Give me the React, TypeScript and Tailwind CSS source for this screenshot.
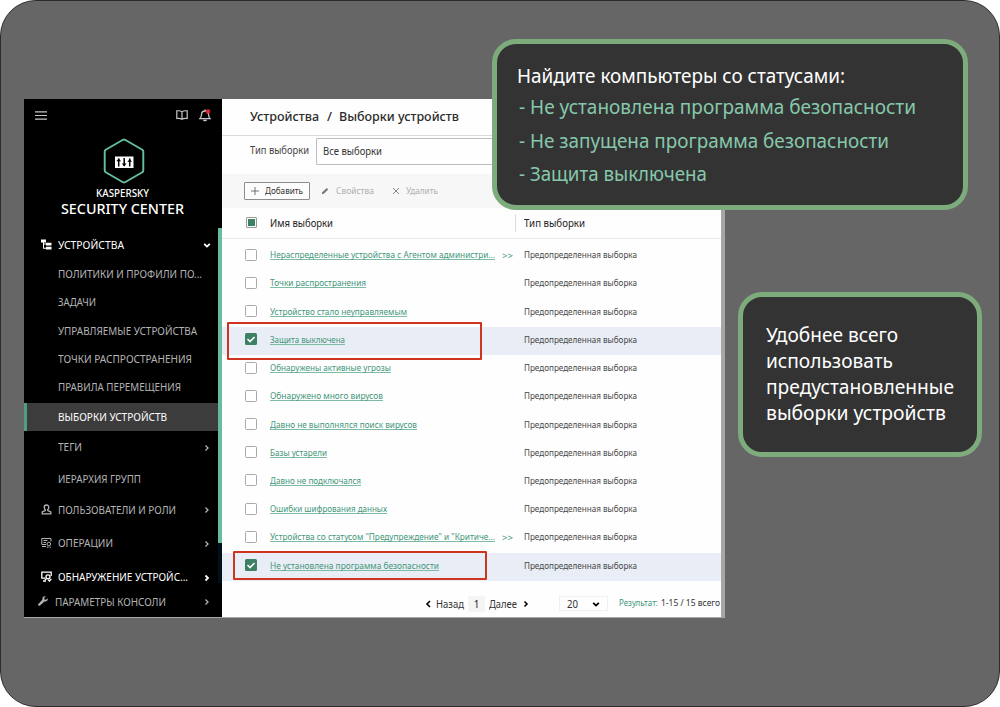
import { useLayoutEffect, useRef, useState } from "react";
import type { ReactNode } from "react";

/** Single line of text condensed or widened to a known width. */
function Fit({ w, className = "", children }: { w: number; className?: string; children: ReactNode }) {
  const ref = useRef<HTMLSpanElement>(null);
  const [scale, setScale] = useState(1);
  useLayoutEffect(() => {
    const el = ref.current;
    if (!el) return;
    const prev = el.style.transform;
    el.style.transform = "none";
    const natural = el.getBoundingClientRect().width;
    el.style.transform = prev;
    if (natural > 0) setScale(w / natural);
  }, [w, children]);
  return (
    <span className={`block shrink-0 whitespace-nowrap ${className}`} style={{ width: w }}>
      <span ref={ref} className="inline-block origin-left" style={{ transform: `scaleX(${scale})` }}>
        {children}
      </span>
    </span>
  );
}

function Chevron({ dir = "right", className = "" }: { dir?: "right" | "left" | "down"; className?: string }) {
  const d = { right: "M2.500 1.500l2.500 2.500-2.500 2.500", left: "M5 1L2 4l3 3", down: "M1.200 2.800l2.800 2.800 2.800-2.800" }[dir];
  return (
    <svg viewBox="0 0 8 8" className={`size-2 shrink-0 ${className}`} fill="none" stroke="currentColor">
      <path d={d} />
    </svg>
  );
}

function TreeIcon() {
  return (
    <svg viewBox="0 0 11 11" className="h-[11px] w-[11px]" fill="currentColor">
      <path d="M0 .5h5v3H3v1h2V3.800h5.500v2.800H5V5.500H3v3.200h2V7.800h5.500v2.800H5v-.9H2V3.500H0z" />
    </svg>
  );
}

function UserIcon() {
  return (
    <svg viewBox="0 0 11 11" className="h-[11px] w-[11px]" fill="none" stroke="currentColor" strokeWidth="1.300">
      <path d="M5.500 1c-1.400 0-2.300 1-2.300 2.300 0 1 .4 1.900 1.100 2.400v.8L1.200 8v1.800h8.600V8L6.700 6.500v-.8c.7-.5 1.100-1.400 1.100-2.400C7.800 2 6.900 1 5.500 1z" />
    </svg>
  );
}

function OperationsIcon() {
  return (
    <svg viewBox="0 0 11 11" className="h-[11px] w-[11px]" fill="none" stroke="currentColor">
      <path d="M10 4.500V1.500H.8v6H5M2.500 3.500h4M2.500 5.500h2.500M1 9.500h4" />
      <circle cx="7.800" cy="7" r="1.800" />
      <path d="M6 10.200h4" strokeDasharray="1 .6" />
    </svg>
  );
}

function DiscoveryIcon() {
  return (
    <svg viewBox="0 0 11 11" className="h-[11px] w-[11px]" fill="none" stroke="currentColor" strokeWidth="1.300">
      <path d="M10.200 5V1.200H.8v6H4M2 10h3" />
      <circle cx="7" cy="5.800" r="2" />
      <path d="M5.600 7.300L3.800 9.300M7 8.800l1.500 1.200 1.800-2.200" />
    </svg>
  );
}

function WrenchIcon() {
  return (
    <svg viewBox="0 0 10 10" className="h-[10px] w-[10px]" fill="currentColor">
      <path d="M9.700 2.200L8 3.800 6.500 3.400 6.200 2 7.800.3C6.600-.1 5.300.3 4.700 1.400c-.4.700-.4 1.400-.2 2L.4 7.900c-.5.5-.4 1.200 0 1.600.4.400 1.100.5 1.600 0l4.400-4.100c.7.200 1.500.1 2.200-.4 1-.6 1.400-1.700 1.100-2.800z" />
    </svg>
  );
}

function Logo() {
  return (
    <svg viewBox="0 0 42 46" className="ml-[3px] h-[46px] w-[42px] shrink-0">
      <path
        d="M20 1.800q1-.5 2 0l17.300 10q1 .6 1 1.700v19q0 1.100-1 1.700L22 44.200q-1 .5-2 0L2.700 34.200q-1-.6-1-1.700v-19q0-1.100 1-1.700z"
        fill="none"
        stroke="#65bfa0"
        strokeWidth="1.900"
      />
      <rect x="12" y="18.500" width="18.500" height="11.500" fill="#fff" />
      <path d="M15.700 20.500v8M21.200 20v8M26.700 20.500v8" stroke="#000" strokeWidth="1.500" />
      <path d="M13.400 23.200l2.300-2.900 2.300 2.900zM18.900 25.500h4.600l-2.300 2.900zM24.400 23.800l2.300-2.900 2.300 2.900z" fill="#000" />
    </svg>
  );
}

type NavProps = {
  label: string;
  w: number;
  h: string;
  icon?: ReactNode;
  chevron?: "right" | "down";
  tone?: string;
  shift?: boolean;
};

function NavItem({ label, w, h, icon, chevron, tone = "text-[#b4b4b4]", shift }: NavProps) {
  return (
    <div className={`flex shrink-0 items-center pb-[1px] ${h} ${tone} ${shift ? "pl-[14px]" : "pl-[17px]"}`}>
      <span className="flex w-[17px] shrink-0">{icon}</span>
      <Fit w={w} className="text-[11px] leading-none">
        {label}
      </Fit>
      {chevron && (
        <span className="ml-auto flex pt-[2px] pr-[7px]">
          <Chevron dir={chevron} className={tone === "text-white" ? "[stroke-width:1.8]" : "[stroke-width:1.3]"} />
        </span>
      )}
    </div>
  );
}

function Sidebar() {
  return (
    <aside className="flex w-[198px] shrink-0 bg-black">
      <div className="flex w-[194px] flex-col">
        <div className="flex h-[32px] items-center pr-[7px] pl-[11px] text-[#c6c6c6]">
          <svg viewBox="0 0 12 9" className="h-[9px] w-[12px]" stroke="currentColor" strokeWidth="1.200">
            <path d="M0 .8h12M0 4.500h12M0 8.200h12" />
          </svg>
          <svg viewBox="0 0 12 10" className="ml-auto h-[10px] w-[12px]" fill="none" stroke="currentColor" strokeWidth="1.200">
            <path d="M6 1.800C5 .8 3 .6 .8 .8v7.700C3 8.300 5 8.500 6 9.400c1-.9 3-1.100 5.200-.9V.8C9 .6 7 .8 6 1.800zv7.600" />
          </svg>
          <svg viewBox="0 0 12 13" className="ml-[11px] h-[13px] w-[12px]" fill="none" stroke="currentColor" strokeWidth="1.300">
            <path d="M.8 9.700h10.400C9.800 8.600 9.600 7.500 9.500 5.500 9.400 3.300 8.200 2 6 2S2.600 3.300 2.500 5.500C2.400 7.500 2.200 8.600.8 9.700zM4.500 10.800c.3 1 2.700 1 3 0M6 2V.5" />
            <circle cx="9" cy="2.500" r="2.300" fill="#e0232e" stroke="none" />
          </svg>
        </div>
        <div className="flex h-[98px] flex-col items-center pt-[7px] pl-[2px] text-white">
          <Logo />
          <Fit w={53} className="mt-[3px] text-[11px] leading-[12px] font-medium">
            KASPERSKY
          </Fit>
          <Fit w={123} className="mt-[2px] text-[14px] leading-[16px] font-medium">
            SECURITY CENTER
          </Fit>
        </div>
        <NavItem h="h-[31px]" label="УСТРОЙСТВА" w={66} icon={<TreeIcon />} chevron="down" tone="text-white" />
        <NavItem h="h-[28.25px]" label="ПОЛИТИКИ И ПРОФИЛИ ПО..." w={144} />
        <NavItem h="h-[28.25px]" label="ЗАДАЧИ" w={38} />
        <NavItem h="h-[28.25px]" label="УПРАВЛЯЕМЫЕ УСТРОЙСТВА" w={139} />
        <NavItem h="h-[28.25px]" label="ТОЧКИ РАСПРОСТРАНЕНИЯ" w={134} />
        <NavItem h="h-[28.25px]" label="ПРАВИЛА ПЕРЕМЕЩЕНИЯ" w={123} />
        <div className="mt-[1.75px] flex h-[28px] shrink-0 items-center border-l-3 border-[#4f9d84] bg-[#3c3c3c] pb-[2px] pl-[31px] text-white">
          <Fit w={109} className="text-[11px] leading-none">
            ВЫБОРКИ УСТРОЙСТВ
          </Fit>
        </div>
        <NavItem h="h-[32px]" label="ТЕГИ" w={24} chevron="right" />
        <NavItem h="h-[31px]" label="ИЕРАРХИЯ ГРУПП" w={83} />
        <NavItem h="h-[31px]" label="ПОЛЬЗОВАТЕЛИ И РОЛИ" w={118} icon={<UserIcon />} chevron="right" />
        <NavItem h="h-[36px]" label="ОПЕРАЦИИ" w={55} icon={<OperationsIcon />} chevron="right" />
        <NavItem h="h-[32px]" label="ОБНАРУЖЕНИЕ УСТРОЙС..." w={130} icon={<DiscoveryIcon />} chevron="right" tone="text-white" />
        <NavItem h="h-[17px]" label="ПАРАМЕТРЫ КОНСОЛИ" w={111} icon={<WrenchIcon />} chevron="right" shift />
      </div>
      <div className="flex w-[4px] flex-col pt-[129px]">
        <div className="h-[315px] bg-[#67bc9d]" />
        <div className="h-[40px] bg-[#02101c]" />
      </div>
    </aside>
  );
}

function Checkbox({ checked }: { checked?: boolean }) {
  return checked ? (
    <span className="flex size-[12px] shrink-0 items-center justify-center rounded-[1.5px] bg-[#3c8163] text-white">
      <svg viewBox="0 0 10 10" className="size-[10px]" fill="none" stroke="currentColor" strokeWidth="1.600">
        <path d="M1.500 5l2.500 2.500 4.500-4.500" />
      </svg>
    </span>
  ) : (
    <span className="size-[12px] shrink-0 rounded-[1.5px] border border-[#a9a9a9] bg-white" />
  );
}

const rows: { name: string; w: number; more?: boolean; checked?: boolean }[] = [
  { name: "Нераспределенные устройства с Агентом администри...", w: 225, more: true },
  { name: "Точки распространения", w: 96 },
  { name: "Устройство стало неуправляемым", w: 137 },
  { name: "Защита выключена", w: 75, checked: true },
  { name: "Обнаружены активные угрозы", w: 121 },
  { name: "Обнаружено много вирусов", w: 113 },
  { name: "Давно не выполнялся поиск вирусов", w: 147 },
  { name: "Базы устарели", w: 57 },
  { name: "Давно не подключался", w: 91 },
  { name: "Ошибки шифрования данных", w: 117 },
  { name: 'Устройства со статусом "Предупреждение" и "Критиче...', w: 225, more: true },
  { name: "Не установлена программа безопасности", w: 169, checked: true },
];

function Main() {
  return (
    <main className="flex w-[499px] shrink-0 flex-col bg-[#fefefe] text-[#333]">
      <div className="flex h-[37px] items-center border-b border-[#d9d9d9] pl-[28px] text-[12px] leading-none font-medium text-[#2b2b2b]">
        <Fit w={69}>Устройства</Fit>
        <Fit w={5} className="ml-[8px]">/</Fit>
        <Fit w={120} className="ml-[7px]">Выборки устройств</Fit>
      </div>
      <div className="flex h-[38px] pt-[2px] pl-[28px]">
        <Fit w={59} className="pt-[6px] text-[10px] leading-[12px] text-[#444]">
          Тип выборки
        </Fit>
        <div className="ml-[7px] flex h-[27px] flex-1 items-center rounded-l-[2px] border border-r-0 border-[#bdbdbd] pb-[1px] pl-[6px]">
          <Fit w={59} className="text-[10px] leading-none text-[#333]">
            Все выборки
          </Fit>
        </div>
      </div>
      <div className="flex h-[34px] items-center bg-[#f7f7f7] pl-[22px] text-[9px] leading-none text-[#b0b0b0]">
        <div className="flex h-[18px] w-[66px] items-center rounded-[1px] border border-[#8c8c8c] bg-[#fcfcfc] pl-[6px] text-[#333]">
          <svg viewBox="0 0 8 8" className="size-2" stroke="#666" strokeWidth=".9">
            <path d="M4 0v8M0 4h8" />
          </svg>
          <Fit w={38} className="ml-[6px] pb-[1px]">Добавить</Fit>
        </div>
        <svg viewBox="0 0 8 8" className="ml-[11px] size-2" fill="#777">
          <path d="M.8 7.300L1.300 5.300 5.700 .9 7.200 2.400 2.800 6.800z" />
        </svg>
        <Fit w={38} className="ml-[7px] pb-[1px]">Свойства</Fit>
        <svg viewBox="0 0 8 8" className="ml-[18px] size-2" stroke="#777" strokeWidth=".9">
          <path d="M1 1l6 6M7 1L1 7" />
        </svg>
        <Fit w={32} className="ml-[6px] pb-[1px]">Удалить</Fit>
      </div>
      <div className="flex h-[31px] items-center border-b border-[#e8e8e8] pl-[24px] text-[10px] leading-none text-[#222]">
        <span className="mb-[2px] flex size-[11px] items-center justify-center rounded-[1px] border border-[#9a9a9a] bg-white">
          <span className="size-[7px] bg-[#3c8163]" />
        </span>
        <Fit w={63} className="ml-[13px]">Имя выборки</Fit>
        <span className="ml-[182px] h-[18px] w-px bg-[#dcdcdc]" />
        <Fit w={61} className="ml-[8px]">Тип выборки</Fit>
      </div>
      <div className="pt-[3.500px]">
        {rows.map((r) => (
          <div
            key={r.name}
            className={`flex h-[28.24px] items-center pb-[4px] pl-[23px] text-[9px] leading-none ${r.checked ? "bg-[#e9edf5]" : ""}`}
          >
            <Checkbox checked={r.checked} />
            <div className="ml-[13px] flex w-[254px] items-center pt-[1px] text-[#43977a]">
              <Fit
                w={r.w}
                className="leading-[12px] [&>span]:underline [&>span]:decoration-[#7dbba5] [&>span]:decoration-1 [&>span]:underline-offset-[1px] [&>span]:[text-decoration-skip-ink:none]"
              >
                {r.name}
              </Fit>
              {r.more && <Fit w={11} className="ml-[7px]">&gt;&gt;</Fit>}
            </div>
            <Fit w={113} className="text-[#484848]">Предопределенная выборка</Fit>
          </div>
        ))}
      </div>
      <div className="flex flex-1 items-center pt-[10px] text-[10px] leading-none text-[#333]">
        <Chevron dir="left" className="ml-[203px] text-black [stroke-width:1.6]" />
        <Fit w={28} className="ml-[3px]">Назад</Fit>
        <span className="ml-[4px] flex h-[16px] w-[17px] items-center justify-center bg-[#f5f5f5] text-[#222]">1</span>
        <Fit w={28} className="ml-[4px]">Далее</Fit>
        <Chevron className="ml-[5px] text-black [stroke-width:1.6]" />
        <div className="mb-[1px] ml-[29px] flex h-[15px] w-[49px] items-center border border-[#f0f0f0] pl-[7px]">
          <Fit w={11}>20</Fit>
          <Chevron dir="down" className="ml-[14px] text-black [stroke-width:1.8]" />
        </div>
        <Fit w={39} className="ml-[11px] pb-[3px] text-[9px] text-[#43977a]">Результат:</Fit>
        <Fit w={59} className="ml-[3px] pb-[3px] text-[9px]">1-15 / 15 всего</Fit>
      </div>
    </main>
  );
}

export default function App() {
  return (
    <div className="h-[707px] w-[1000px] overflow-hidden bg-white font-['Noto_Sans','Open_Sans',sans-serif]">
      <div className="relative h-[707px] w-[1000px] rounded-[36px] border border-[#2c2c2c] bg-[#666] pt-[98px] pl-[23px]">
        <div className="flex h-[519px] w-[701px] border-r-4 border-b border-[#a6a6a6]">
          <Sidebar />
          <Main />
        </div>

        <div className="absolute top-[321px] left-[226px] h-[38px] w-[255px] rounded-[1px] border-2 border-[#cf3420]" />
        <div className="absolute top-[550px] left-[232px] h-[29px] w-[254px] rounded-[1px] border-2 border-[#cf3420]" />

        <section className="absolute top-[38px] left-[491px] flex h-[171px] w-[476px] flex-col rounded-[24px] border-5 border-[#7dab7c] bg-[#333] pt-[18px] pl-[20px] text-[19px] text-[#86c8ab]">
          <Fit w={328} className="mb-[1px] leading-[28px] text-white">Найдите компьютеры со статусами:</Fit>
          <Fit w={397} className="ml-[2px] h-[33px] leading-[33px]">- Не установлена программа безопасности</Fit>
          <Fit w={370} className="ml-[2px] h-[34px] leading-[34px]">- Не запущена программа безопасности</Fit>
          <Fit w={177 + 11} className="ml-[2px] h-[33px] leading-[33px]">- Защита выключена</Fit>
        </section>

        <section className="absolute top-[291px] left-[737px] flex h-[165px] w-[244px] flex-col rounded-[24px] border-5 border-[#7dab7c] bg-[#333] pt-[25px] pl-[23px] text-[19px] leading-[26px] text-white">
          <Fit w={132}>Удобнее всего</Fit>
          <Fit w={127}>использовать</Fit>
          <Fit w={188}>предустановленные</Fit>
          <Fit w={180}>выборки устройств</Fit>
        </section>
      </div>
    </div>
  );
}
